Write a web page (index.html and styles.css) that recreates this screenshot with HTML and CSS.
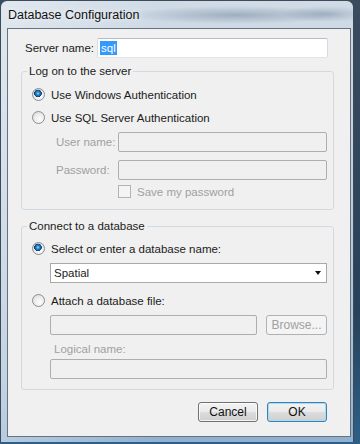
FILE: index.html
```html
<!DOCTYPE html>
<html lang="en">
<head>
    <meta charset="UTF-8">
    <meta name="viewport" content="width=device-width, initial-scale=1.0">
    <title>Database Configuration</title>
    <link rel="stylesheet" href="styles.css">
</head>
<body>
    <div class="window">
        <div class="titlebar">
            <span class="title">Database Configuration</span>
        </div>
        <div class="client">
            <div class="server-row">
                <span class="server-label">Server name:</span>
                <div class="textbox active"><span class="selected">sql</span></div>
            </div>

            <fieldset class="group logon">
                <legend>Log on to the server</legend>
                <div class="option"><span class="radio checked"></span>Use Windows Authentication</div>
                <div class="option"><span class="radio"></span>Use SQL Server Authentication</div>
                <div class="field-row first">
                    <span class="field-label">User name:</span>
                    <div class="textbox disabled"></div>
                </div>
                <div class="field-row">
                    <span class="field-label">Password:</span>
                    <div class="textbox disabled"></div>
                </div>
                <div class="check-row"><span class="checkbox"></span>Save my password</div>
            </fieldset>

            <fieldset class="group connect">
                <legend>Connect to a database</legend>
                <div class="option"><span class="radio checked"></span>Select or enter a database name:</div>
                <div class="combo">
                    <span>Spatial</span>
                    <span class="arrow"></span>
                </div>
                <div class="option attach"><span class="radio"></span>Attach a database file:</div>
                <div class="file-row">
                    <div class="textbox disabled"></div>
                    <button class="btn browse" disabled>Browse...</button>
                </div>
                <div class="logical-label">Logical name:</div>
                <div class="textbox disabled logical"></div>
            </fieldset>

            <div class="buttons">
                <button class="btn">Cancel</button>
                <button class="btn default">OK</button>
            </div>
        </div>
    </div>
</body>
</html>
```

FILE: styles.css
```css
* {
    box-sizing: border-box;
}
body {
    margin: 0;
    width: 360px;
    height: 444px;
    overflow: hidden;
    background: linear-gradient(to bottom, #3a4c5e, #27415a 70%, #2f5f86);
    font-family: "Liberation Sans", Arial, sans-serif;
    font-size: 11.5px;
    color: #1b1b1b;
}
.window {
    width: 354px;
    height: 442px;
    border: 1px solid #3b4b5c;
    border-bottom: none;
    border-radius: 7px 7px 0 0;
    padding: 0 2px 5px 6px;
    display: flex;
    flex-direction: column;
    background:
        radial-gradient(ellipse 110px 9px at 235px 14px, rgba(70, 92, 122, 0.35), transparent),
        radial-gradient(ellipse 45px 8px at 325px 13px, rgba(70, 92, 122, 0.3), transparent),
        linear-gradient(to right, rgba(255, 255, 255, 0.35), rgba(255, 255, 255, 0) 45%),
        linear-gradient(to bottom, #d0dbe6 0, #c0cfdd 40%, #a6bdd3 85%, #8fb0d0 100%);
}
.titlebar {
    height: 27px;
    display: flex;
    align-items: center;
    padding-left: 1px;
}
.title {
    color: #111;
    font-size: 12.5px;
    text-shadow: 0 0 6px rgba(255, 255, 255, 0.9);
}
.client {
    flex: 1;
    border: 1px solid #66727e;
    background-color: #f0f0f0;
    padding: 9px 16px 0 13px;
}

/* server name */
.server-row {
    display: flex;
    align-items: center;
    height: 20px;
}
.server-label {
    flex: 0 0 76px;
    padding-left: 4px;
    white-space: nowrap;
}
.textbox {
    height: 20px;
    border: 1px solid #a9acb2;
    border-radius: 2px;
    display: flex;
    align-items: center;
    padding-left: 2px;
}
.textbox.active {
    flex: 1;
    margin-right: 6px;
    background-color: #fff;
    border-color: #b5bcc6 #d6dce4 #e0e5eb #d6dce4;
}
.textbox.disabled {
    flex: 1;
    background-color: #f0f0f0;
    border-color: #aeaeae;
}
.selected {
    background-color: #3399ff;
    color: #fff;
    line-height: 14px;
    padding: 0 1px;
}

/* group boxes */
.group {
    margin: 6px 0 0;
    padding: 4px 6px 11px 10px;
    border: 1px solid #d3d9de;
    border-radius: 3px;
    min-width: 0;
}
.group legend {
    margin-left: -5px;
    padding: 0 2px;
    line-height: 15px;
}
.connect {
    margin-top: 9px;
    padding-top: 3px;
    padding-bottom: 10px;
}
.option {
    display: flex;
    align-items: center;
    height: 23px;
    gap: 6px;
}
.option.attach {
    margin-top: 6px;
}
.radio {
    flex: 0 0 13px;
    height: 13px;
    border-radius: 50%;
    border: 1px solid #8b8d90;
    background: radial-gradient(circle at 60% 65%, #fdfdfd 0, #ececec 50%, #d6d6d6 100%);
}
.radio.checked {
    background:
        radial-gradient(circle at 45% 40%, #9be0ff 0, #2a8fd0 1.5px, #135a98 3px, #0d3a66 3.6px, transparent 4px),
        radial-gradient(circle at 60% 65%, #fdfdfd 0, #ececec 50%, #d6d6d6 100%);
}
.field-row {
    display: flex;
    align-items: center;
    margin: 8px 0 0 24px;
    color: #a0a0a0;
}
.field-row.first {
    margin-top: 3px;
}
.field-label {
    flex: 0 0 62px;
    white-space: nowrap;
}
.check-row {
    display: flex;
    align-items: center;
    gap: 6px;
    height: 13px;
    margin: 5px 0 0 86px;
    color: #a0a0a0;
}
.checkbox {
    flex: 0 0 13px;
    height: 13px;
    border: 1px solid #b3b3b3;
    background-color: #f4f4f4;
}

/* database section */
.combo {
    height: 20px;
    margin: 3px 0 0 18px;
    border: 1px solid #a9a9a9;
    background-color: #fff;
    display: flex;
    align-items: center;
    justify-content: space-between;
    padding: 0 5px 0 3px;
}
.arrow {
    width: 0;
    height: 0;
    border-left: 3.5px solid transparent;
    border-right: 3.5px solid transparent;
    border-top: 4px solid #111;
}
.file-row {
    display: flex;
    gap: 9px;
    margin: 3px 0 0 18px;
}
.logical-label {
    margin: 7px 0 0 22px;
    line-height: 15px;
    color: #a0a0a0;
}
.textbox.logical {
    margin: 2px 0 0 18px;
}

/* buttons */
.buttons {
    display: flex;
    justify-content: flex-end;
    gap: 9px;
    margin-top: 12px;
    padding-right: 7px;
}
.btn {
    width: 60px;
    height: 20px;
    padding: 0;
    font-family: inherit;
    font-size: 12px;
    color: #111;
    border: 1px solid #707070;
    border-radius: 3px;
    background: linear-gradient(to bottom, #f2f2f2 0, #ebebeb 48%, #dddddd 52%, #cfcfcf 100%);
    box-shadow: inset 0 0 0 1px rgba(255, 255, 255, 0.8);
}
.btn.default {
    border-color: #3c7fb1;
    box-shadow: inset 0 0 0 1px #a6dcf5;
}
.btn.browse {
    width: 61px;
    flex: 0 0 61px;
    color: #a0a0a0;
    border-color: #adb2b5;
    background: #f4f4f4;
    box-shadow: none;
}
```
